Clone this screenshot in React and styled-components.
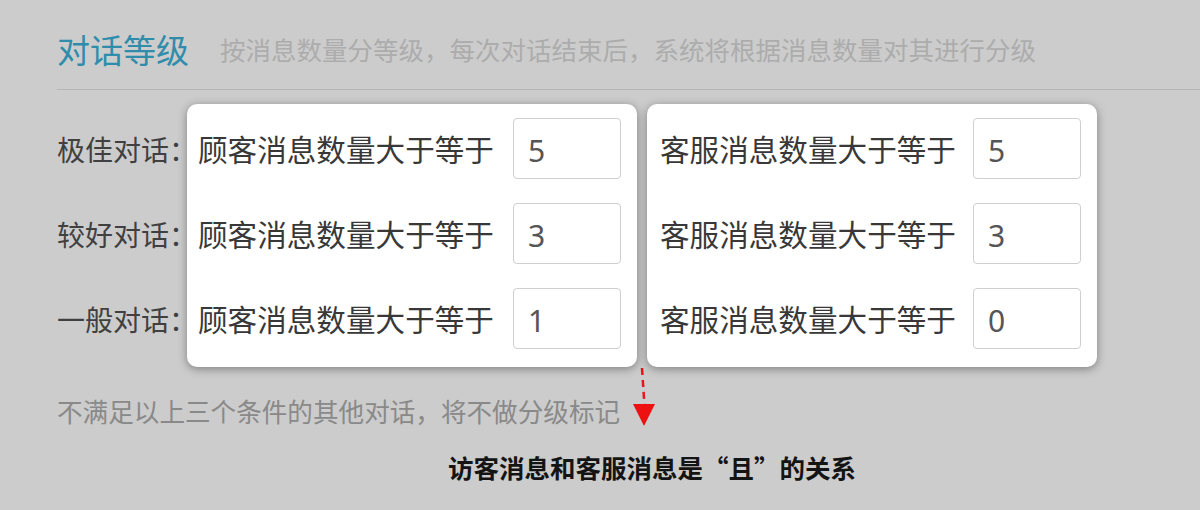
import React from 'react';
import styled, { createGlobalStyle } from 'styled-components';

const GlobalStyle = createGlobalStyle`
    html, body {
        margin: 0;
        padding: 0;
        background: #cccccc;
    }
    body {
        font-family: "Noto Sans CJK SC", "Microsoft YaHei", sans-serif;
    }
`;

const levels = [
    { name: '极佳对话：', visitor: 5, agent: 5 },
    { name: '较好对话：', visitor: 3, agent: 3 },
    { name: '一般对话：', visitor: 1, agent: 0 },
];

const App = () => {
    return (
        <Page>
            <GlobalStyle />
            <Header>
                <Title>对话等级</Title>
                <Subtitle>按消息数量分等级，每次对话结束后，系统将根据消息数量对其进行分级</Subtitle>
            </Header>

            <Levels>
                <LabelColumn>
                    {levels.map((l) => (
                        <LevelName key={l.name}>{l.name}</LevelName>
                    ))}
                </LabelColumn>
                <Card $padLeft={11}>
                    {levels.map((l) => (
                        <Row key={l.name}>
                            <RowText>顾客消息数量大于等于</RowText>
                            <CountInput value={l.visitor} readOnly />
                        </Row>
                    ))}
                </Card>
                <Card $padLeft={13}>
                    {levels.map((l) => (
                        <Row key={l.name}>
                            <RowText>客服消息数量大于等于</RowText>
                            <CountInput value={l.agent} readOnly />
                        </Row>
                    ))}
                </Card>
            </Levels>

            <Footer>
                <Note>不满足以上三个条件的其他对话，将不做分级标记</Note>
                <Arrow width="24" height="62" viewBox="0 0 24 62">
                    <line x1="10" y1="2" x2="12.5" y2="40" stroke="#e8141a" strokeWidth="2.5" strokeDasharray="7 5" />
                    <polygon points="1,38 23,38 12,60" fill="#ee1111" />
                </Arrow>
            </Footer>

            <Relation>访客消息和客服消息是“且”的关系</Relation>
        </Page>
    );
};

const Page = styled.div`
    padding-left: 57px;
    height: 510px;
    box-sizing: border-box;
    overflow: hidden;
`;

const Header = styled.div`
    display: flex;
    align-items: center;
    gap: 31px;
    padding: 32px 0 23px;
    border-bottom: 1px solid #b6b6b6;
`;

const Title = styled.h1`
    margin: 0;
    font-size: 33px;
    line-height: 34px;
    font-weight: 400;
    color: #2f8cab;
`;

const Subtitle = styled.span`
    font-size: 25.5px;
    line-height: 34px;
    color: #acacac;
    white-space: nowrap;
`;

const Levels = styled.div`
    display: flex;
    gap: 10px;
    margin-top: 14px;
`;

const LabelColumn = styled.div`
    width: 120px;
    display: flex;
    flex-direction: column;
    gap: 24px;
    padding-top: 14px;
`;

const LevelName = styled.div`
    height: 61px;
    display: flex;
    align-items: center;
    font-size: 28px;
    color: #404040;
    white-space: nowrap;
`;

const Card = styled.div`
    width: 450px;
    box-sizing: border-box;
    padding: 14px 16px 18px ${(p) => p.$padLeft}px;
    display: flex;
    flex-direction: column;
    gap: 24px;
    background: #ffffff;
    border-radius: 10px;
    box-shadow: 0 2px 10px rgba(0, 0, 0, 0.38);
    position: relative;
    z-index: 1;
`;

const Row = styled.div`
    display: flex;
    align-items: center;
    justify-content: space-between;
    height: 61px;
`;

const RowText = styled.span`
    font-size: 29.6px;
    color: #383838;
    white-space: nowrap;
`;

const CountInput = styled.input`
    width: 108px;
    height: 61px;
    box-sizing: border-box;
    padding: 4px 14px 0;
    border: 1px solid #cfcfcf;
    border-radius: 4px;
    font-family: "Noto Sans", "Open Sans", sans-serif;
    font-size: 30px;
    color: #555555;
    background: #ffffff;
    outline: none;
`;

const Footer = styled.div`
    position: relative;
    width: 600px;
    padding-top: 26px;
`;

const Note = styled.div`
    font-size: 25.6px;
    line-height: 36px;
    color: #898989;
    white-space: nowrap;
`;

const Arrow = styled.svg`
    position: absolute;
    left: 575px;
    top: -1px;
`;

const Relation = styled.div`
    margin-top: 20px;
    padding-left: 391px;
    font-size: 25.5px;
    line-height: 36px;
    font-weight: 700;
    color: #141414;
    white-space: nowrap;
`;

export default App;
